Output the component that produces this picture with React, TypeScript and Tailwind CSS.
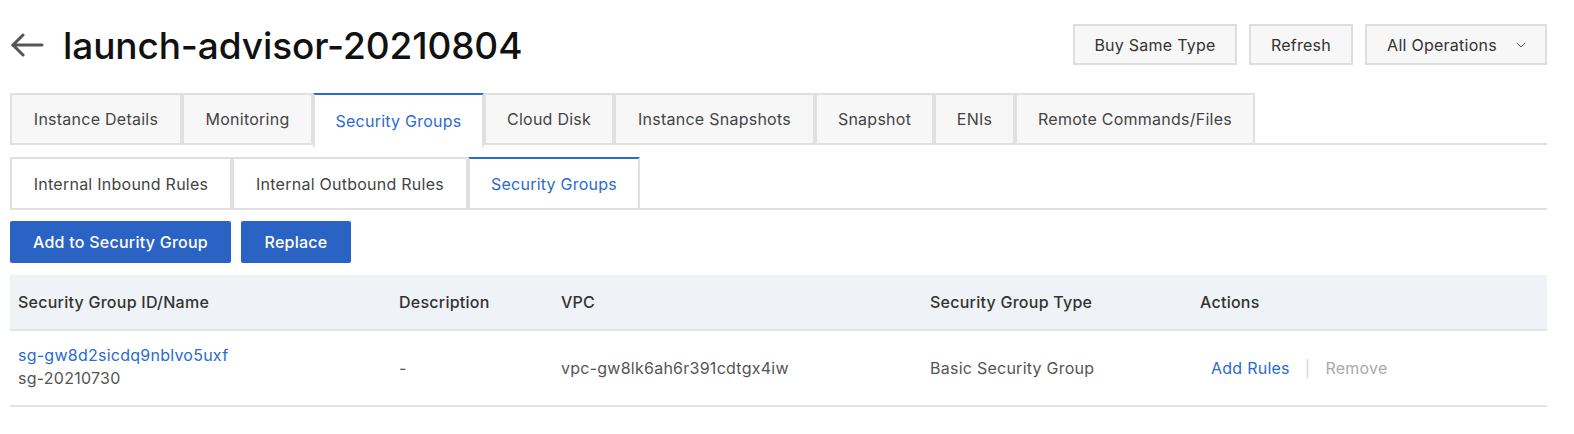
import React from 'react';
import { ChevronDown } from 'lucide-react';

const tabs = [
  'Instance Details',
  'Monitoring',
  'Security Groups',
  'Cloud Disk',
  'Instance Snapshots',
  'Snapshot',
  'ENIs',
  'Remote Commands/Files',
];

const tabWidths = ['w-[172px]', 'w-[131px]', 'w-[171px]', 'w-[130px]', 'w-[201px]', 'w-[119px]', 'w-[81px]', 'w-[240px]'];

const subTabs = ['Internal Inbound Rules', 'Internal Outbound Rules', 'Security Groups'];
const subTabWidths = ['w-[222px]', 'w-[236px]', 'w-[172px]'];

const BackArrow: React.FC = () => (
  <svg width="34" height="24" viewBox="0 0 34 24" fill="none" stroke="#555" strokeWidth="3" strokeLinecap="round" strokeLinejoin="round">
    <path d="M32 12H3" />
    <path d="M13 2L3 12l10 10" />
  </svg>
);

const App: React.FC = () => {
  return (
    <div className="min-h-screen bg-white pl-[10px] pr-[27px] text-[16px] tracking-[0.25px] text-[#333] font-['Inter','Liberation_Sans',sans-serif]">
      {/* header */}
      <header className="flex items-start justify-between h-[93px]">
        <div className="flex items-center gap-[19px] pt-[24px] h-[66px]">
          <BackArrow />
          <h1 className="text-[37px] font-medium text-[#111] tracking-[-0.1px] leading-none">launch-advisor-20210804</h1>
        </div>
        <div className="flex items-center gap-[12px] pt-[24px]">
          <button className="h-[41px] w-[164px] border-2 border-[#dedede] bg-[#f7f7f7] text-[#333]">Buy Same Type</button>
          <button className="h-[41px] w-[104px] border-2 border-[#dedede] bg-[#f7f7f7] text-[#333]">Refresh</button>
          <button className="h-[41px] w-[182px] border-2 border-[#dedede] bg-[#f7f7f7] text-[#333] flex items-center justify-center gap-[16px] pl-[4px]">
            All Operations
            <ChevronDown size={16} strokeWidth={1.5} className="text-[#555]" />
          </button>
        </div>
      </header>

      {/* main tabs */}
      <nav className="flex h-[52px] border-b-2 border-[#e0e0e0]">
        {tabs.map((t, i) => {
          const active = i === 2;
          return (
            <div
              key={t}
              className={`${tabWidths[i]} flex items-center justify-center border-2 border-b-0 ${
                active
                  ? 'bg-white border-[#e0e0e0] border-t-[#2a6bd0] text-[#2a6bd0] -mb-[2px] h-[54px]'
                  : 'bg-[#f7f7f7] border-[#e0e0e0] text-[#444]'
              }`}
            >
              {t}
            </div>
          );
        })}
      </nav>

      {/* sub tabs */}
      <nav className="flex h-[53px] mt-[12px] border-b-2 border-[#e0e0e0]">
        {subTabs.map((t, i) => {
          const active = i === 2;
          return (
            <div
              key={t}
              className={`${subTabWidths[i]} flex items-center justify-center border-2 border-b-0 bg-white ${
                active ? 'border-[#e0e0e0] border-t-[#2a6bd0] text-[#2a6bd0]' : 'border-[#e0e0e0] text-[#444]'
              }`}
            >
              {t}
            </div>
          );
        })}
      </nav>

      {/* action buttons */}
      <div className="flex gap-[10px] mt-[11px]">
        <button className="h-[42px] w-[221px] rounded-[2px] bg-[#2b63c4] text-white font-medium">Add to Security Group</button>
        <button className="h-[42px] w-[110px] rounded-[2px] bg-[#2b63c4] text-white font-medium">Replace</button>
      </div>

      {/* table */}
      <div className="mt-[12px]">
        <div className="grid grid-cols-[381px_162px_369px_270px_1fr] h-[56px] items-center bg-[#eff2f6] border-b-2 border-[#e1e4e8] font-medium text-[#333]">
          <div className="pl-[8px]">Security Group ID/Name</div>
          <div className="pl-[8px]">Description</div>
          <div className="pl-[8px]">VPC</div>
          <div className="pl-[8px]">Security Group Type</div>
          <div className="pl-[8px]">Actions</div>
        </div>
        <div className="grid grid-cols-[381px_162px_369px_270px_1fr] h-[76px] items-center border-b-2 border-[#e1e4e8] text-[#555]">
          <div className="pl-[8px] leading-[23px] pb-[2px]">
            <div className="text-[#2a6bd0]">sg-gw8d2sicdq9nblvo5uxf</div>
            <div>sg-20210730</div>
          </div>
          <div className="pl-[8px]">-</div>
          <div className="pl-[8px]">vpc-gw8lk6ah6r391cdtgx4iw</div>
          <div className="pl-[8px]">Basic Security Group</div>
          <div className="pl-[19px] flex items-center">
            <span className="text-[#2a6bd0]">Add Rules</span>
            <span className="mx-[15px] text-[#d4d4d4]">|</span>
            <span className="text-[#aaa]">Remove</span>
          </div>
        </div>
      </div>
    </div>
  );
};

export default App;
